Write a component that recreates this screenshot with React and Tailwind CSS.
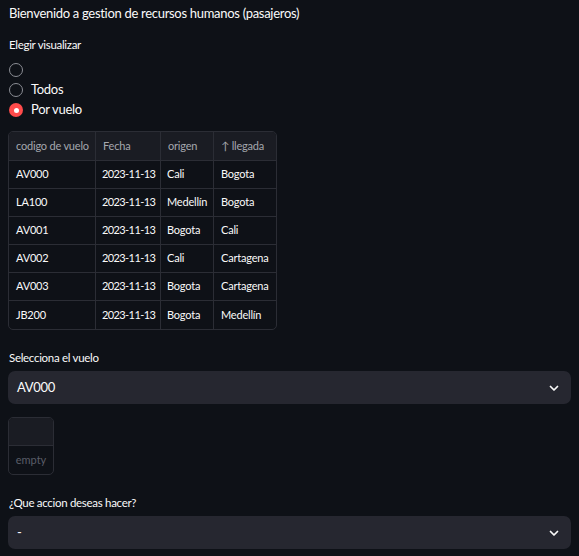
import React from "react";

const rows = [
  ["AV000", "2023-11-13", "Cali", "Bogota"],
  ["LA100", "2023-11-13", "Medellín", "Bogota"],
  ["AV001", "2023-11-13", "Bogota", "Cali"],
  ["AV002", "2023-11-13", "Cali", "Cartagena"],
  ["AV003", "2023-11-13", "Bogota", "Cartagena"],
  ["JB200", "2023-11-13", "Bogota", "Medellín"],
];

const widths = ["w-[87px]", "w-[65px]", "w-[53px]", "w-[62px]"];

function Chevron() {
  return (
    <svg width="12" height="12" viewBox="0 0 24 24" fill="none" stroke="#fafafa" strokeWidth="3.5" strokeLinecap="round" strokeLinejoin="round">
      <path d="M5 9l7 7 7-7" />
    </svg>
  );
}

function Radio({ checked, label }) {
  return (
    <div className="flex items-center h-[20px] gap-[8px]">
      {checked ? (
        <span className="w-[14px] h-[14px] rounded-full bg-[#ff4b4b] flex items-center justify-center">
          <span className="w-[5px] h-[5px] rounded-full bg-white" />
        </span>
      ) : (
        <span className="w-[14px] h-[14px] rounded-full border border-[#8b8d94]" />
      )}
      <span className="text-[13px] tracking-[-0.3px] text-[#fafafa]">{label}</span>
    </div>
  );
}

function Select({ value }) {
  return (
    <div className="mx-[8px] h-[33px] rounded-[7px] bg-[#262730] flex items-center justify-between pl-[9px] pr-[11px]">
      <span className="text-[13px] tracking-[-0.3px] text-[#fafafa]">{value}</span>
      <Chevron />
    </div>
  );
}

export default function App() {
  return (
    <div className="min-h-[556px] w-[579px] bg-[#0e1117] text-[#fafafa] overflow-hidden" style={{ fontFamily: "Lato, 'Noto Sans', sans-serif" }}>
      <div className="pl-[9px] pt-[3px] text-[13px] tracking-[-0.3px] h-[20px] leading-[20px] whitespace-nowrap">
        Bienvenido a gestion de recursos humanos (pasajeros)
      </div>
      <div className="pl-[9px] mt-[17px] text-[11.5px] tracking-[-0.3px] leading-[16px]">Elegir visualizar</div>
      <div className="pl-[9px] mt-[7px] flex flex-col">
        <Radio checked={false} label="" />
        <Radio checked={false} label="Todos" />
        <Radio checked={true} label="Por vuelo" />
      </div>

      <div className="ml-[8px] mt-[11px] w-[269px] rounded-[5px] border border-[#2b2d35] overflow-hidden text-[11px] tracking-[-0.2px]">
        <div className="flex h-[29px] bg-[#1a1c23] text-[#a5a7ae] border-b border-[#2b2d35]">
          {["codigo de vuelo", "Fecha", "origen", "↑ llegada"].map((h, i) => (
            <div key={i} className={`${widths[i]} shrink-0 px-[7px] flex items-center whitespace-nowrap overflow-hidden ${i < 3 ? "border-r border-[#2b2d35]" : ""}`}>
              {h}
            </div>
          ))}
        </div>
        {rows.map((r, ri) => (
          <div key={ri} className={`flex h-[28px] ${ri < rows.length - 1 ? "border-b border-[#2b2d35]" : ""}`}>
            {r.map((c, i) => (
              <div key={i} className={`${widths[i]} shrink-0 ${i === 1 ? "px-[6px] tracking-[-0.6px]" : i === 2 ? "px-[6px]" : "px-[7px]"} flex items-center whitespace-nowrap overflow-hidden ${i < 3 ? "border-r border-[#2b2d35]" : ""}`}>
                {c}
              </div>
            ))}
          </div>
        ))}
      </div>

      <div className="pl-[9px] mt-[20px] text-[11.5px] tracking-[-0.3px] leading-[16px]">Selecciona el vuelo</div>
      <div className="mt-[5px]">
        <Select value="AV000" />
      </div>

      <div className="ml-[8px] mt-[13px] w-[46px] h-[58px] rounded-[5px] border border-[#2b2d35] flex flex-col overflow-hidden">
        <div className="h-[28px] bg-[#1a1c23] border-b border-[#2b2d35]" />
        <div className="flex-1 flex items-center justify-center text-[11px] text-[#5a5d68]">empty</div>
      </div>

      <div className="pl-[9px] mt-[20px] text-[11.5px] tracking-[-0.3px] leading-[16px]">¿Que accion deseas hacer?</div>
      <div className="mt-[5px]">
        <Select value="-" />
      </div>
    </div>
  );
}
